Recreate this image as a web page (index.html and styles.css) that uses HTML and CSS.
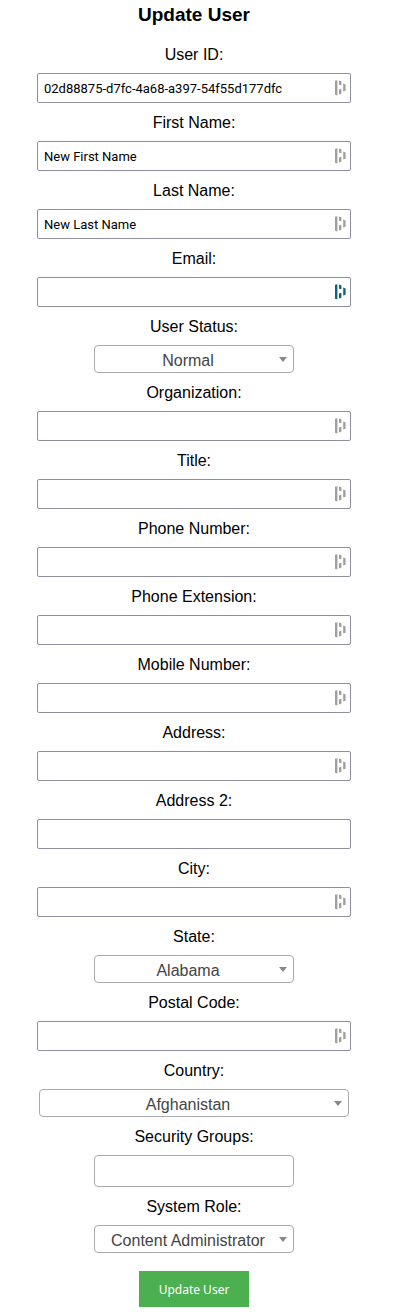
FILE: index.html
```
<!DOCTYPE html>
<html lang="en">
<head>
<meta charset="utf-8">
<meta name="viewport" content="width=device-width, initial-scale=1">
<title>Update User</title>
<link rel="stylesheet" href="styles.css">
</head>
<body>
<svg class="sprite" width="0" height="0" aria-hidden="true">
  <symbol id="manager" viewBox="0 0 12 16">
    <path d="M0 .8l2.4-.6v15.2L0 14.8zM4 .4l2.4.8v4L4 4.8zM4 9.4l2.4-.6v5L4 14.6zM8.2 3.6l2.4.8v6.4l-2.4.8z"/>
  </symbol>
  <symbol id="caret" viewBox="0 0 8 5"><path d="M0 0h8L4 5z"/></symbol>
</svg>
<form class="form">
  <h3 class="title">Update User</h3>

  <label class="label" for="userId">User ID:</label>
  <div class="field"><input class="input" id="userId" type="text" value="02d88875-d7fc-4a68-a397-54f55d177dfc"><svg class="mark"><use href="#manager"/></svg></div>

  <label class="label" for="firstName">First Name:</label>
  <div class="field"><input class="input" id="firstName" type="text" value="New First Name"><svg class="mark"><use href="#manager"/></svg></div>

  <label class="label" for="lastName">Last Name:</label>
  <div class="field"><input class="input" id="lastName" type="text" value="New Last Name"><svg class="mark"><use href="#manager"/></svg></div>

  <label class="label" for="email">Email:</label>
  <div class="field"><input class="input" id="email" type="email"><svg class="mark mark-active"><use href="#manager"/></svg></div>

  <label class="label" for="status">User Status:</label>
  <div class="field field-narrow"><select class="select" id="status"><option>Normal</option></select><svg class="caret"><use href="#caret"/></svg></div>

  <label class="label" for="organization">Organization:</label>
  <div class="field"><input class="input" id="organization" type="text"><svg class="mark"><use href="#manager"/></svg></div>

  <label class="label" for="jobTitle">Title:</label>
  <div class="field"><input class="input" id="jobTitle" type="text"><svg class="mark"><use href="#manager"/></svg></div>

  <label class="label" for="phone">Phone Number:</label>
  <div class="field"><input class="input" id="phone" type="tel"><svg class="mark"><use href="#manager"/></svg></div>

  <label class="label" for="extension">Phone Extension:</label>
  <div class="field"><input class="input" id="extension" type="text"><svg class="mark"><use href="#manager"/></svg></div>

  <label class="label" for="mobile">Mobile Number:</label>
  <div class="field"><input class="input" id="mobile" type="tel"><svg class="mark"><use href="#manager"/></svg></div>

  <label class="label" for="address">Address:</label>
  <div class="field"><input class="input" id="address" type="text"><svg class="mark"><use href="#manager"/></svg></div>

  <label class="label" for="address2">Address 2:</label>
  <div class="field"><input class="input" id="address2" type="text"></div>

  <label class="label" for="city">City:</label>
  <div class="field"><input class="input" id="city" type="text"><svg class="mark"><use href="#manager"/></svg></div>

  <label class="label" for="state">State:</label>
  <div class="field field-narrow"><select class="select" id="state"><option>Alabama</option></select><svg class="caret"><use href="#caret"/></svg></div>

  <label class="label" for="postal">Postal Code:</label>
  <div class="field"><input class="input" id="postal" type="text"><svg class="mark"><use href="#manager"/></svg></div>

  <label class="label" for="country">Country:</label>
  <div class="field field-wide"><select class="select" id="country"><option>Afghanistan</option></select><svg class="caret"><use href="#caret"/></svg></div>

  <label class="label" for="groups">Security Groups:</label>
  <div class="field field-narrow"><input class="groups" id="groups" type="search"></div>

  <label class="label" for="role">System Role:</label>
  <div class="field field-narrow"><select class="select" id="role"><option>Content Administrator</option></select><svg class="caret"><use href="#caret"/></svg></div>

  <button class="submit" type="button">Update User</button>
</form>
</body>
</html>
```
FILE: styles.css
```
* {
  box-sizing: border-box;
}

body {
  margin: 0;
  background: #fff;
  color: #000;
  font: 16px/20px "Liberation Sans", Arial, sans-serif;
}

.sprite {
  position: absolute;
}

.form {
  display: flex;
  flex-direction: column;
  align-items: center;
  padding: 3px 51px 8px 37px;
}

.title {
  margin: 0 0 18px;
  font-size: 19px;
  line-height: 24px;
}

.label {
  display: block;
  margin-bottom: 8px;
}

.field {
  position: relative;
  display: flex;
  width: 100%;
  margin-bottom: 10px;
}

.field-narrow {
  max-width: 200px;
}

.field-wide {
  padding: 0 2px;
}

.input,
.select,
.groups {
  width: 100%;
  margin: 0;
  background: #fff;
}

.input {
  height: 30px;
  padding: 0 24px 0 6px;
  border: 1px solid #8f8f9d;
  border-radius: 2px;
  color: #000;
  font: 13px Roboto, sans-serif;
}

.mark {
  position: absolute;
  top: 7px;
  right: 4px;
  width: 12px;
  height: 16px;
  fill: #a09f9b;
  pointer-events: none;
}

.mark-active {
  fill: #0e6375;
}

.select {
  height: 28px;
  padding: 3px 20px 0 8px;
  border: 1px solid #aaa;
  border-radius: 4px;
  appearance: none;
  color: #444;
  font: 16px "Liberation Sans", Arial, sans-serif;
  text-align: center;
  text-align-last: center;
}

.caret {
  position: absolute;
  top: 12px;
  right: 7px;
  width: 8px;
  height: 5px;
  fill: #888;
  pointer-events: none;
}

.field-wide .caret {
  right: 9px;
}

.groups {
  height: 32px;
  padding: 0 8px;
  border: 1px solid #aaa;
  border-radius: 4px;
  appearance: none;
  font: 16px "Liberation Sans", Arial, sans-serif;
}

.submit {
  height: 36px;
  margin-top: 8px;
  padding: 0 20px;
  border: 0;
  background: #4caf50;
  color: #fff;
  font: 12px "Noto Sans", sans-serif;
}
```
